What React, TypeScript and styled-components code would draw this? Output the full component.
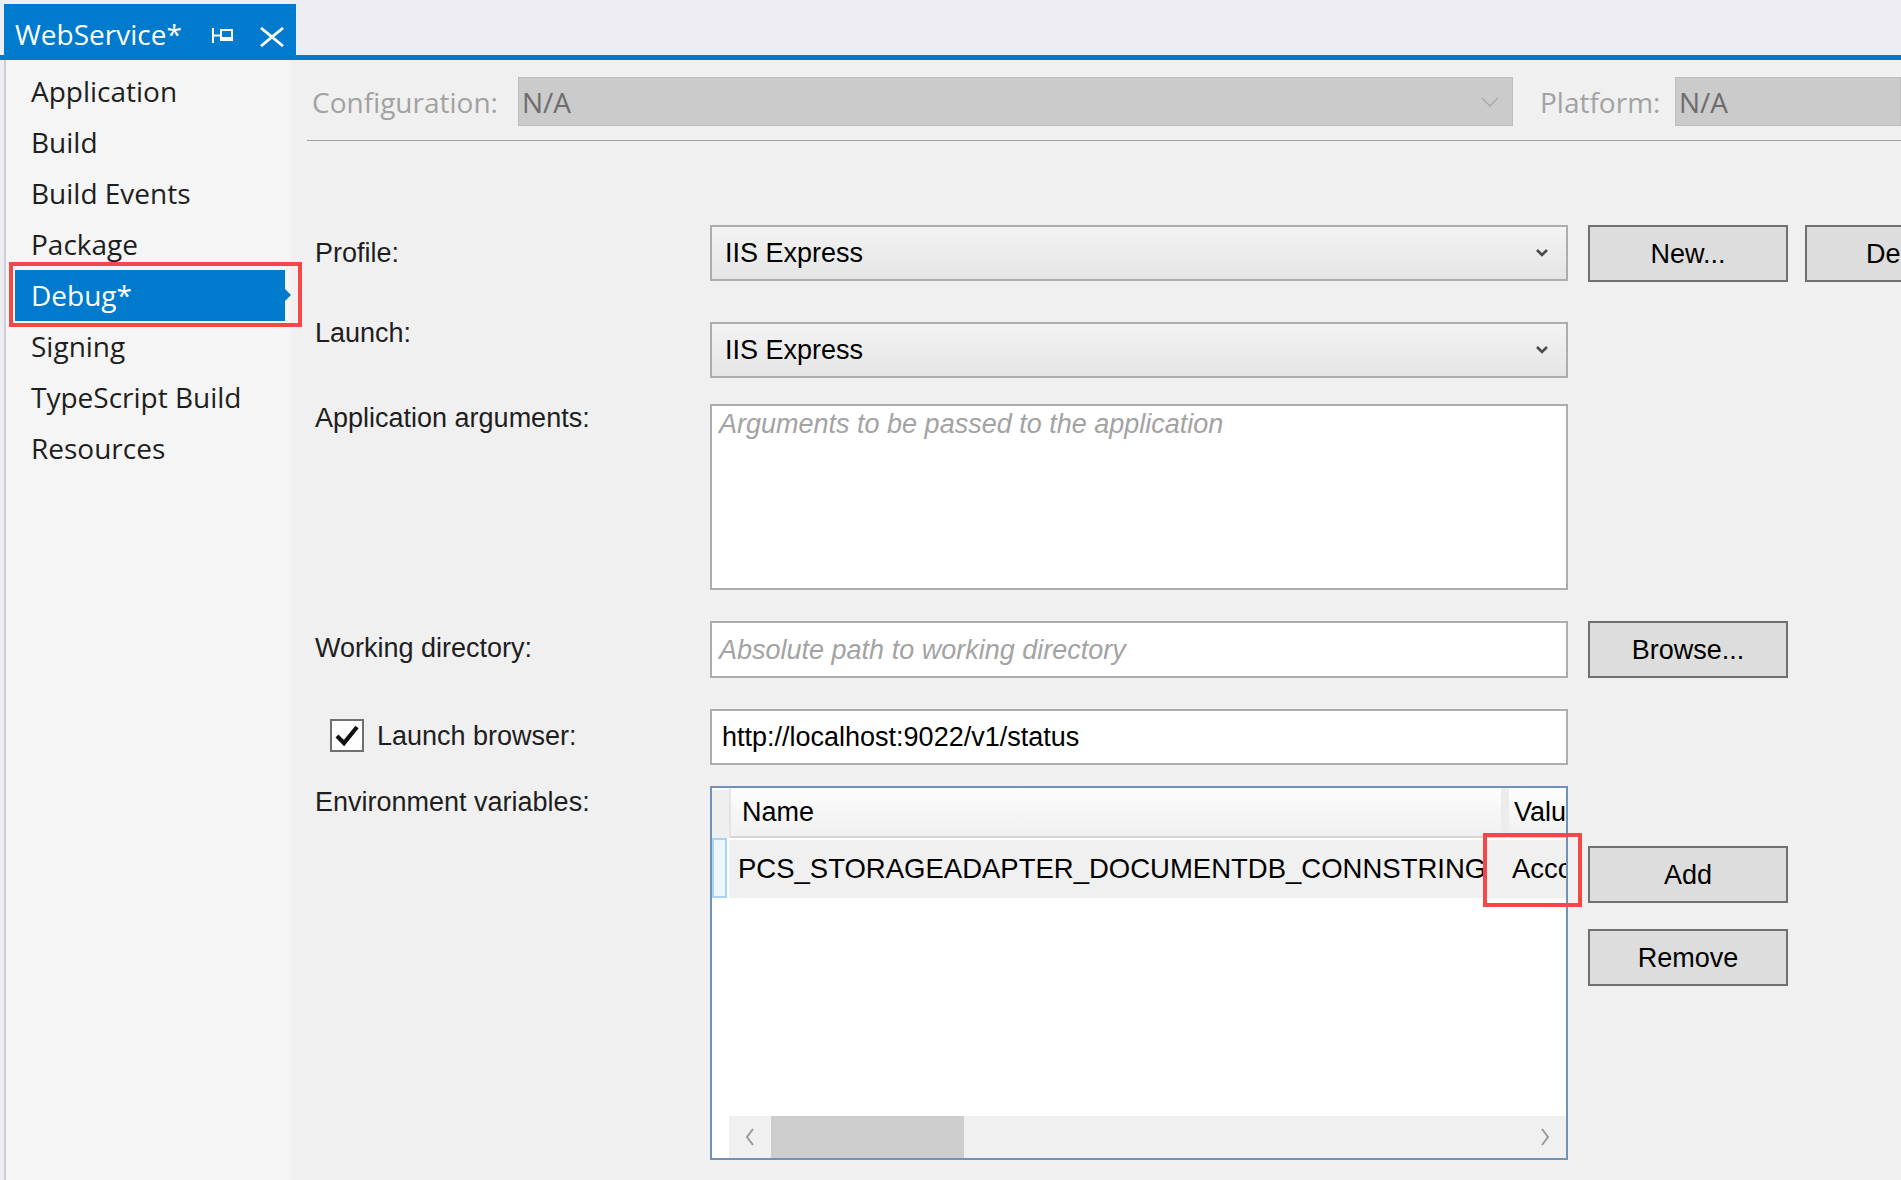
import React from "react";
import styled, { createGlobalStyle } from "styled-components";

const Global = createGlobalStyle`
  html, body { margin: 0; padding: 0; overflow: hidden; background: #eeeef2; }
  #root { width: 1901px; height: 1180px; overflow: hidden; }
`;

const UI = `"Open Sans", "Noto Sans", sans-serif`;
const WIN = `"Liberation Sans", Arial, sans-serif`;

const Page = styled.div`
  width: 1901px;
  height: 1180px;
  display: flex;
  flex-direction: column;
  background: #eeeef2;
`;

const TabStrip = styled.div`
  padding: 4px 0 0 4px;
  border-bottom: 5px solid #007acc;
  box-sizing: content-box;
  height: 51px;
  display: flex;
`;

const Tab = styled.div`
  width: 292px;
  height: 51px;
  background: #007acc;
  display: flex;
  align-items: flex-start;
  padding: 11px 0 0 11px;
  box-sizing: border-box;
  color: #fff;
  font: 28px/38px ${UI};
`;

const TabTitle = styled.span`
  width: 193px;
  white-space: nowrap;
`;

const TabIcon = styled.svg<{ $mt: number; $ml: number }>`
  margin-top: ${(p) => p.$mt}px;
  margin-left: ${(p) => p.$ml}px;
  flex: none;
`;

const Body = styled.div`
  flex: 1;
  display: flex;
  padding-left: 4px;
  min-height: 0;
`;

const Sidebar = styled.nav`
  width: 285px;
  border-left: 2px solid #cdcddb;
  background: #f5f5f5;
  padding-top: 6px;
  display: flex;
  flex-direction: column;
`;

const NavItem = styled.div<{ $active?: boolean }>`
  position: relative;
  margin-left: 9px;
  width: 270px;
  height: 51px;
  padding-left: 16px;
  box-sizing: border-box;
  font: 28px/51px ${UI};
  color: ${(p) => (p.$active ? "#fff" : "#1e1e1e")};
  background: ${(p) => (p.$active ? "#007acc" : "transparent")};
  white-space: nowrap;
  ${(p) =>
    p.$active &&
    `&::after {
      content: "";
      position: absolute;
      right: -6px;
      top: 19px;
      border-left: 6px solid #007acc;
      border-top: 6px solid transparent;
      border-bottom: 6px solid transparent;
    }`}
`;

const RedMark = styled.div<{ $l: number; $t: number; $w: number; $h: number }>`
  position: absolute;
  left: ${(p) => p.$l}px;
  top: ${(p) => p.$t}px;
  width: ${(p) => p.$w}px;
  height: ${(p) => p.$h}px;
  border: 4px solid #f44747;
  box-sizing: border-box;
  pointer-events: none;
`;

const Main = styled.main`
  flex: 1;
  background: #f0f0f0;
  display: flex;
  flex-direction: column;
  min-width: 0;
`;

const ConfigBar = styled.div`
  display: flex;
  align-items: center;
  padding: 17px 0 0 21px;
  white-space: nowrap;
`;

const ConfigLabel = styled.div<{ $w: number; $ml?: number }>`
  width: ${(p) => p.$w}px;
  margin-left: ${(p) => p.$ml || 0}px;
  flex: none;
  font: 28px/38px ${UI};
  color: #a2a2a2;
`;

const ConfigBox = styled.div<{ $w?: number }>`
  height: 49px;
  box-sizing: border-box;
  ${(p) => (p.$w ? `width: ${p.$w}px;` : `flex: 1;`)}
  flex-shrink: 0;
  background: #cbcbcb;
  border: 1px solid #bdbdbd;
  display: flex;
  align-items: center;
  justify-content: space-between;
  padding: 0 13px 0 3px;
  font: 28px/38px ${UI};
  color: #6d6d6d;
`;

const Separator = styled.div`
  margin: 14px 0 0 16px;
  height: 1px;
  background: #a0a0a0;
`;

const Form = styled.div`
  display: flex;
  flex-direction: column;
  padding-left: 24px;
`;

const Row = styled.div<{ $mt: number }>`
  margin-top: ${(p) => p.$mt}px;
  display: grid;
  grid-template-columns: 375px 858px auto;
  column-gap: 20px;
  align-items: start;
`;

const Label = styled.div<{ $dy: number }>`
  margin-top: ${(p) => p.$dy}px;
  font: 27px/32px ${WIN};
  color: #1e1e1e;
  white-space: nowrap;
  display: flex;
  align-items: center;
`;

const Select = styled.div`
  height: 56px;
  box-sizing: border-box;
  border: 2px solid #adadad;
  background: linear-gradient(#f3f3f3, #e5e5e5);
  display: flex;
  align-items: center;
  justify-content: space-between;
  padding: 0 17px 0 13px;
  font: 27px/32px ${WIN};
  color: #000;
`;

const TextBox = styled.div<{ $h: number; $top?: boolean; $pl: number }>`
  height: ${(p) => p.$h}px;
  box-sizing: border-box;
  border: 2px solid #adadad;
  background: #fff;
  display: flex;
  align-items: ${(p) => (p.$top ? "flex-start" : "center")};
  padding: ${(p) => (p.$top ? "2px" : "0")} 0 0 ${(p) => p.$pl}px;
  font: 27px/32px ${WIN};
  color: #000;
  white-space: nowrap;
`;

const Placeholder = styled.span`
  font-style: italic;
  color: #a3a3a3;
`;

const Buttons = styled.div<{ $col?: boolean; $pt?: number }>`
  display: flex;
  flex-direction: ${(p) => (p.$col ? "column" : "row")};
  gap: ${(p) => (p.$col ? 26 : 17)}px;
  padding-top: ${(p) => p.$pt || 0}px;
`;

const Button = styled.div<{ $h?: number }>`
  width: 200px;
  height: ${(p) => p.$h || 57}px;
  flex: none;
  box-sizing: border-box;
  border: 2px solid #707070;
  background: #dddddd;
  display: flex;
  align-items: center;
  justify-content: center;
  font: 27px/32px ${WIN};
  color: #000;
  white-space: nowrap;
  overflow: hidden;
`;

const CheckRow = styled.div`
  display: flex;
  align-items: center;
  margin-top: 10px;
  padding-left: 15px;
  gap: 13px;
  font: 27px/32px ${WIN};
  color: #1e1e1e;
`;

const CheckBox = styled.div`
  width: 34px;
  height: 33px;
  box-sizing: border-box;
  border: 2px solid #707070;
  background: #fff;
  display: flex;
  align-items: center;
  justify-content: center;
`;

const GridWrap = styled.div`
  position: relative;
`;

const Grid = styled.div`
  height: 374px;
  box-sizing: border-box;
  border: 2px solid #7191b6;
  background: #fff;
  display: flex;
  flex-direction: column;
  overflow: hidden;
`;

const GridRow = styled.div<{ $h: number }>`
  height: ${(p) => p.$h}px;
  display: grid;
  grid-template-columns: 17px 780px 1fr;
  flex: none;
`;

const RowHead = styled.div<{ $sel?: boolean }>`
  box-sizing: border-box;
  background: ${(p) => (p.$sel ? "#eef7fd" : "#efefef")};
  border: ${(p) => (p.$sel ? "2px solid #a7d5f4" : "none")};
  border-top: ${(p) => (p.$sel ? "2px solid #a7d5f4" : "2px solid #fff")};
  margin-right: ${(p) => (p.$sel ? 2 : 0)}px;
`;

const HeadCell = styled.div<{ $pl: number; $sep?: boolean; $first?: boolean }>`
  box-sizing: border-box;
  background: linear-gradient(#ffffff 0%, #f7f7f7 40%, #f1f1f1 100%);
  border-bottom: 2px solid #d6d6d6;
  ${(p) => (p.$first ? "border-left: 2px solid #e4e4e4;" : "")}
  ${(p) => (p.$sep ? "border-right: 8px solid #ececec;" : "")}
  display: flex;
  align-items: center;
  padding-left: ${(p) => p.$pl}px;
  font: 27px/32px ${WIN};
  color: #000;
  white-space: nowrap;
  overflow: hidden;
`;

const Cell = styled.div<{ $pl: number }>`
  background: #f0f0f0;
  display: flex;
  align-items: center;
  padding-left: ${(p) => p.$pl}px;
  margin-top: 2px;
  font: 27.5px/32px ${WIN};
  color: #000;
  white-space: nowrap;
  overflow: hidden;
`;

const GridSpacer = styled.div`
  flex: 1;
`;

const HScroll = styled.div`
  height: 42px;
  margin-left: 17px;
  background: #f0f0f0;
  display: flex;
  align-items: stretch;
  flex: none;
`;

const ScrollArrow = styled.div`
  width: 42px;
  display: flex;
  align-items: center;
  justify-content: center;
  flex: none;
`;

const ScrollTrack = styled.div`
  flex: 1;
  display: flex;
`;

const ScrollThumb = styled.div`
  width: 193px;
  background: #cdcdcd;
`;

const Chevron = () => (
  <svg width="14" height="10" viewBox="0 0 14 10">
    <path d="M2 2 L7 7 L12 2" fill="none" stroke="#4a4a4a" strokeWidth="2.6" />
  </svg>
);

const ThinChevron = () => (
  <svg width="18" height="10" viewBox="0 0 18 10">
    <path d="M1 1 L9 9 L17 1" fill="none" stroke="#a8a8a8" strokeWidth="1.3" />
  </svg>
);

const navItems = [
  "Application",
  "Build",
  "Build Events",
  "Package",
  "Debug*",
  "Signing",
  "TypeScript Build",
  "Resources",
];

export default function App() {
  return (
    <Page>
      <Global />
      <TabStrip>
        <Tab>
          <TabTitle>WebService*</TabTitle>
          <TabIcon $mt={13} $ml={4} width="21" height="15" viewBox="0 0 21 15">
            <rect x="0" y="0" width="2" height="15" fill="#fff" />
            <rect x="2" y="6.5" width="6" height="2" fill="#fff" />
            <rect x="9" y="2" width="11" height="10" fill="none" stroke="#fff" strokeWidth="2" />
            <rect x="8" y="9" width="13" height="3" fill="#fff" />
          </TabIcon>
          <TabIcon $mt={12} $ml={26} width="26" height="20" viewBox="0 0 26 20">
            <path d="M2 1 L24 19 M24 1 L2 19" stroke="#fff" strokeWidth="2.8" fill="none" />
          </TabIcon>
        </Tab>
      </TabStrip>
      <Body>
        <Sidebar>
          {navItems.map((n) => (
            <NavItem key={n} $active={n === "Debug*"}>
              {n}
              {n === "Debug*" && <RedMark $l={-6} $t={-8} $w={293} $h={65} />}
            </NavItem>
          ))}
        </Sidebar>
        <Main>
          <ConfigBar>
            <ConfigLabel $w={206}>Configuration:</ConfigLabel>
            <ConfigBox $w={995}>
              <span>N/A</span>
              <ThinChevron />
            </ConfigBox>
            <ConfigLabel $w={135} $ml={27}>
              Platform:
            </ConfigLabel>
            <ConfigBox>
              <span>N/A</span>
            </ConfigBox>
          </ConfigBar>
          <Separator />
          <Form>
            <Row $mt={84}>
              <Label $dy={12}>Profile:</Label>
              <Select>
                <span>IIS Express</span>
                <Chevron />
              </Select>
              <Buttons>
                <Button>New...</Button>
                <Button>Delete</Button>
              </Buttons>
            </Row>
            <Row $mt={40}>
              <Label $dy={-5}>Launch:</Label>
              <Select>
                <span>IIS Express</span>
                <Chevron />
              </Select>
            </Row>
            <Row $mt={26}>
              <Label $dy={-2}>Application arguments:</Label>
              <TextBox $h={186} $top $pl={7}>
                <Placeholder>Arguments to be passed to the application</Placeholder>
              </TextBox>
            </Row>
            <Row $mt={31}>
              <Label $dy={11}>Working directory:</Label>
              <TextBox $h={57} $pl={7}>
                <Placeholder>Absolute path to working directory</Placeholder>
              </TextBox>
              <Buttons>
                <Button>Browse...</Button>
              </Buttons>
            </Row>
            <Row $mt={31}>
              <CheckRow>
                <CheckBox>
                  <svg width="24" height="22" viewBox="0 0 24 22">
                    <path d="M2 11 L9 18 L22 2" fill="none" stroke="#111" strokeWidth="4.2" />
                  </svg>
                </CheckBox>
                <span>Launch browser:</span>
              </CheckRow>
              <TextBox $h={56} $pl={10}>
                http://localhost:9022/v1/status
              </TextBox>
            </Row>
            <Row $mt={21}>
              <Label $dy={0}>Environment variables:</Label>
              <GridWrap>
                <Grid>
                  <GridRow $h={50}>
                    <RowHead />
                    <HeadCell $pl={11} $sep $first>
                      Name
                    </HeadCell>
                    <HeadCell $pl={5}>Value</HeadCell>
                  </GridRow>
                  <GridRow $h={60}>
                    <RowHead $sel />
                    <Cell $pl={9}>PCS_STORAGEADAPTER_DOCUMENTDB_CONNSTRING</Cell>
                    <Cell $pl={3}>AccountEndpoint</Cell>
                  </GridRow>
                  <GridSpacer />
                  <HScroll>
                    <ScrollArrow>
                      <svg width="10" height="18" viewBox="0 0 10 18">
                        <path d="M8 1 L2 9 L8 17" fill="none" stroke="#9a9a9a" strokeWidth="2" />
                      </svg>
                    </ScrollArrow>
                    <ScrollTrack>
                      <ScrollThumb />
                    </ScrollTrack>
                    <ScrollArrow>
                      <svg width="10" height="18" viewBox="0 0 10 18">
                        <path d="M2 1 L8 9 L2 17" fill="none" stroke="#9a9a9a" strokeWidth="2" />
                      </svg>
                    </ScrollArrow>
                  </HScroll>
                </Grid>
                <RedMark $l={773} $t={47} $w={99} $h={74} />
              </GridWrap>
              <Buttons $col $pt={60}>
                <Button>Add</Button>
                <Button>Remove</Button>
              </Buttons>
            </Row>
          </Form>
        </Main>
      </Body>
    </Page>
  );
}
